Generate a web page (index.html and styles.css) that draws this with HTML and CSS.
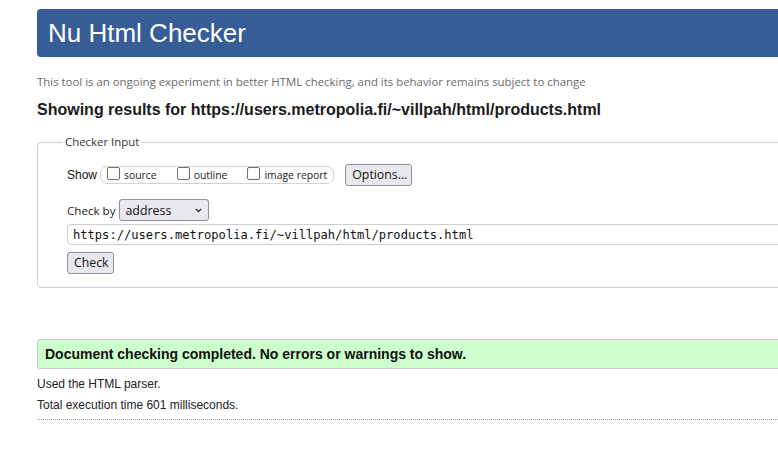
FILE: index.html
```html
<!DOCTYPE html>
<html lang="en">
<head>
<meta charset="utf-8">
<title>Nu Html Checker</title>
<link rel="stylesheet" href="styles.css">
</head>
<body>
<div class="page">
  <h1 class="banner">Nu Html Checker</h1>
  <p class="tagline">This tool is an ongoing experiment in better HTML checking, and its behavior remains subject to change</p>
  <h2 class="results-title">Showing results for https://users.metropolia.fi/~villpah/html/products.html</h2>
  <form class="checker-form">
    <fieldset class="checker-input">
      <legend class="legend">Checker Input</legend>
      <div class="row show-row">
        <span class="show-label">Show</span>
        <span class="show-group">
          <label class="opt"><input type="checkbox" class="cb"><span>source</span></label>
          <label class="opt"><input type="checkbox" class="cb"><span>outline</span></label>
          <label class="opt"><input type="checkbox" class="cb"><span>image report</span></label>
        </span>
        <button type="button" class="btn options-btn">Options...</button>
      </div>
      <div class="row checkby-row">
        <span class="checkby-label">Check by</span>
        <span class="select-wrap">
          <select class="select"><option>address</option></select>
          <svg class="chevron" width="7" height="5" viewBox="0 0 7 5"><path d="M0.8 0.9 L3.5 3.6 L6.2 0.9" fill="none" stroke="#222" stroke-width="1.3"/></svg>
        </span>
      </div>
      <input class="url-input" type="text" value="https://users.metropolia.fi/~villpah/html/products.html">
      <div class="row submit-row">
        <button type="button" class="btn check-btn">Check</button>
      </div>
    </fieldset>
  </form>
  <p class="success">Document checking completed. No errors or warnings to show.</p>
  <p class="info first">Used the HTML parser.</p>
  <p class="info">Total execution time 601 milliseconds.</p>
  <hr class="divider">
</div>
</body>
</html>
```
FILE: styles.css
```css
html {
  overflow: hidden;
}
body {
  margin: 0;
  background: #fff;
  font-family: "Liberation Sans", Arial, sans-serif;
  color: #222;
}
.page {
  padding: 9px 0 0 37px;
  margin-right: -60px;
}
.banner {
  margin: 0;
  height: 48px;
  line-height: 48px;
  padding-left: 11px;
  background: #365d95;
  border-radius: 4px 0 0 4px;
  color: #fff;
  font-size: 26px;
  font-weight: normal;
  font-family: "Liberation Sans", Arial, sans-serif;
}
.tagline {
  margin: 17px 0 0;
  line-height: 16px;
  font-family: "Open Sans", sans-serif;
  font-size: 11.42px;
  color: #6b6b6b;
}
.results-title {
  margin: 10px 0 0;
  line-height: 20px;
  font-size: 16px;
  font-weight: bold;
  color: #1a1a1a;
}
.checker-form {
  margin: 14px 0 0;
}
.checker-input {
  margin: 0;
  padding: 14px 0 13px 29px;
  border: 1px solid #cfcfcf;
  border-radius: 4px;
  min-width: 0;
}
.legend {
  padding: 0 2px;
  margin-left: -4px;
  line-height: 16px;
  font-family: "Open Sans", sans-serif;
  font-size: 11.4px;
  color: #333;
}
.row {
  display: flex;
  align-items: center;
}
.show-row {
  height: 22px;
}
.show-label {
  font-size: 12px;
  color: #111;
  margin-right: 3px;
}
.show-group {
  display: flex;
  align-items: flex-start;
  height: 16px;
  padding: 0 6px 0 6px;
  border: 1px solid #d2d2d2;
  border-radius: 7px;
  gap: 20px;
}
.opt {
  display: flex;
  align-items: flex-start;
  gap: 4px;
  font-family: "Open Sans", sans-serif;
  font-size: 10.4px;
  line-height: 16px;
  color: #222;
}
.opt span {
  line-height: 17px;
}
.cb {
  appearance: none;
  -webkit-appearance: none;
  margin: 0;
  width: 13px;
  height: 13px;
  border: 1px solid #6f6f6f;
  border-radius: 2px;
  background: #fff;
}
.btn {
  margin: 0;
  height: 22px;
  padding: 0 6px;
  border: 1px solid #8f8f9d;
  border-radius: 3px;
  background: #e9e9ed;
  font-family: "Open Sans", sans-serif;
  font-size: 12.3px;
  color: #111;
  line-height: 18px;
}
.options-btn {
  margin-left: 11px;
  width: 67px;
}
.checkby-row {
  margin-top: 13px;
  height: 22px;
}
.checkby-label {
  font-family: "Open Sans", sans-serif;
  font-size: 11.6px;
  color: #222;
  margin-right: 4px;
}
.select-wrap {
  position: relative;
  display: inline-block;
}
.select {
  appearance: none;
  -webkit-appearance: none;
  margin: 0;
  width: 90px;
  height: 22px;
  padding: 0 0 0 5px;
  border: 1px solid #8f8f9d;
  border-radius: 3px;
  background: #e9e9ed;
  font-family: "Open Sans", sans-serif;
  font-size: 12.4px;
  color: #111;
}
.chevron {
  position: absolute;
  right: 7px;
  top: 9px;
  pointer-events: none;
}
.url-input {
  display: block;
  box-sizing: border-box;
  width: calc(100% - 2px);
  height: 21px;
  margin: 3px 0 0;
  padding: 0 5px;
  border: 1px solid #cfcfcf;
  border-radius: 4px;
  font-family: "DejaVu Sans Mono", monospace;
  font-size: 12.1px;
  color: #111;
  background: #fff;
}
.submit-row {
  margin-top: 7px;
}
.check-btn {
  width: 47px;
  height: 22px;
}
.success {
  margin: 51px 0 0;
  height: 28px;
  line-height: 28px;
  padding-left: 7px;
  border: 1px solid #c8c8c8;
  border-radius: 3px 0 0 3px;
  background: #ccffcc;
  font-size: 14px;
  font-weight: bold;
  color: #111;
}
.info {
  margin: 5px 0 0;
  line-height: 16px;
  font-size: 12px;
  color: #222;
}
.info.first {
  margin-top: 7px;
}
.divider {
  margin: 6px 0 0;
  border: 0;
  border-top: 1px dotted #9a9a9a;
  height: 0;
}
```
